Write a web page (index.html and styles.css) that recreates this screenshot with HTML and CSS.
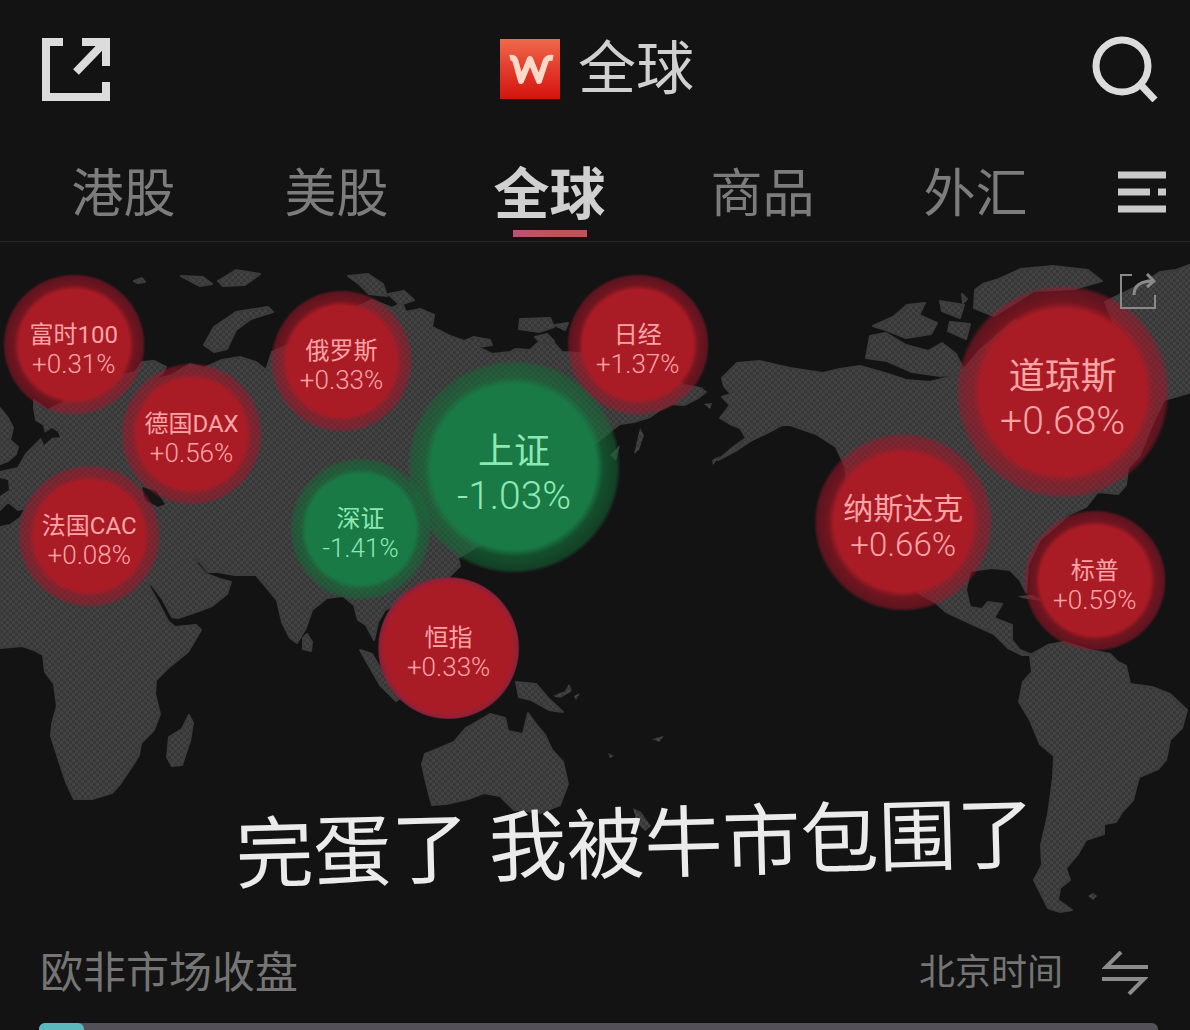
FILE: index.html
```html
<!DOCTYPE html>
<html lang="zh-CN">
<head>
<meta charset="utf-8">
<meta name="viewport" content="width=device-width, initial-scale=1">
<title>全球</title>
<link rel="stylesheet" href="styles.css">
</head>
<body>
<header class="topbar">
  <button class="icon-button" type="button" aria-label="分享">
    <svg class="icon-share" viewBox="0 0 68 64" fill="none" stroke="currentColor" stroke-width="8">
      <path d="M21 5H4v55h60V45M40 5h24v24M62 6 34 35"/>
    </svg>
  </button>
  <h1 class="title">
    <svg class="logo" viewBox="0 0 60 60" aria-hidden="true">
      <defs>
        <linearGradient id="logo-red" x1="0" y1="0" x2="0" y2="1">
          <stop offset="0" stop-color="#f06a4c"/><stop offset=".5" stop-color="#e33a2c"/><stop offset="1" stop-color="#d4140f"/>
        </linearGradient>
      </defs>
      <path fill="url(#logo-red)" d="M0 0h60v60H0z"/>
      <path fill="none" stroke="#ffd9c8" stroke-width="6" stroke-linejoin="round" d="M10 19c4-1 5 1 6 5l5 18 9-22 9 22 6-18c1-4 3-6 8-5"/>
    </svg>
    <span>全球</span>
  </h1>
  <button class="icon-button" type="button" aria-label="搜索">
    <svg class="icon-search" viewBox="0 0 66 66" fill="none" stroke="currentColor" stroke-width="7">
      <circle cx="30" cy="30" r="26"/><path d="m48 48 15 16"/>
    </svg>
  </button>
</header>

<nav class="tabs">
  <a class="tab" href="#hk">港股</a>
  <a class="tab" href="#us">美股</a>
  <a class="tab tab-active" href="#global" aria-current="page">全球</a>
  <a class="tab" href="#goods">商品</a>
  <a class="tab" href="#fx">外汇</a>
  <button class="icon-button tabs-menu" type="button" aria-label="栏目">
    <svg class="icon-menu" viewBox="0 0 48 42" fill="none" stroke="currentColor" stroke-width="7">
      <path d="M0 4h48M0 21h32M40 21h8M0 38h48"/>
    </svg>
  </button>
</nav>

<main>
<section class="map" aria-label="全球指数">
  <svg class="world" viewBox="0 242 1190 680" aria-hidden="true">
    <defs>
      <pattern id="dots" width="6" height="6" patternUnits="userSpaceOnUse">
        <path fill="#434343" d="M0 0h6v6H0z"/>
        <path fill="#373737" d="M0 0h3v3H0zM3 3h3v3H3z"/>
      </pattern>
    </defs>
    <g fill="url(#dots)" stroke="#3c3c3c" stroke-width="2" stroke-linejoin="round">
      <path d="M0 408 8 418 13 428 10 440 18 447 16 454 8 461 0 464z"/>
      <path d="M34 400 48 410 60 404 100 380 135 372 142 362 154 361 166 367 162 374 150 380 170 376 190 364 204 368 222 360 240 357 256 362 266 370 272 352 300 340 330 320 372 300 392 308 402 303 406 312 420 309 434 315 432 327 450 336 464 341 474 337 490 340 492 345 478 347 492 354 510 352 516 349 530 350 540 341 554 343 562 352 600 354 650 360 684 385 700 388 706 392 698 398 684 405 672 404 660 410 650 417 634 422 620 424 612 430 600 440 590 447 580 470 560 500 520 525 480 545 458 558 460 566 448 578 430 590 405 600 385 610 378 622 374 640 366 625 358 620 354 605 343 596 327 598 312 610 306 628 297 643 290 638 282 622 277 600 267 588 256 575 235 575 218 572 208 572 195 557 197 564 206 574 220 579 231 582 227 594 212 606 196 612 178 618 172 617 163 600 148 580 150 588 158 602 168 621 175 627 196 625 201 630 188 652 168 668 156 680 155 694 160 714 154 730 141 743 139 755 131 768 120 784 112 793 92 799 74 799 66 782 58 758 51 736 52 724 57 706 54 684 45 672 43 655 34 650 22 646 0 648V527L10 525 20 518 26 508 18 510 8 502 0 510V472L18 468 26 454 34 446 46 434 44 425 36 420 34 408z"/>
      <path d="m189 715 4 8-3 18-8 24-10 1-5-9 2-20 13-8z"/>
      <path d="m307 634 5 8-1 9-8-2v-11zM360 650l12 4 12 20 20 22-8 5-16-16z"/>
      <path d="m204 345 10-18 22-15 32-5 5 5-22 7-15 11-9 19-13 3zM181 276l22 1 9 7-12 2zM218 281l18-11 24 4-15 11-22 1zM134 281l8-3 3 4-7 1zM348 276l20-2 15 10 4 12-18-2-10-10zM388 294l16-3 10 9-14 5zM520 319l30-1 4 9-15 5-20-3zM555 325l13-2-3 7zM535 337l12-3 7 7-12 3z"/>
      <path d="M425 754 440 748 454 742 466 728 480 720 490 714 505 718 508 731 523 734 528 713 535 723 545 735 552 750 563 762 568 784 560 805 540 813 526 811 514 810 500 796 484 793 468 799 446 804 432 805 429 794 425 778 422 764z"/>
      <path d="m516 682 20 2 12 14 15 14-14-2-18-10-12-3z"/>
      <path stroke="none" d="m553 696 12-5 4-7 3 7-12 7zM574 696l6-3-4 7zM652 739l12-3-5 6zM608 753l6 3-4 2zM633 808l8 4 10 14-6 5-8-8z"/>
      <path stroke="none" d="m695 391 8-4-4 12zM704 404l8-1-2 6zM640 428l4 7-5 15-5 4zM610 455l10-10-4 16zM712 460l8-4-7 9z"/>
      <path d="M722 378 737 363 760 361 790 368 823 373 840 369 860 366 888 374 906 380 930 382 960 374 980 350 1015 320 1060 350 1120 340 1105 302 1140 285 1160 272 1176 270 1192 264V392L1178 396 1164 400 1152 425 1140 455 1128 468 1126 485 1118 494 1098 492 1086 507 1070 514 1040 540 1028 565 1026 592 1020 580 1010 570 992 568 970 571 966 590 970 607 982 609 988 602 1002 604 994 618 1012 625 1012 640 1020 650 1032 655 1022 655 1008 648 994 634 972 624 946 612 935 602 920 594 880 550 848 490 845 466 836 447 816 434 790 425 782 425 765 434 752 440 737 450 718 460 732 448 746 438 740 428 730 424 720 418 730 405 722 397 731 394 724 386z"/>
      <path d="m866 358 4-22 16-3 20 12 22 6 14-8 14 11 10 20-26 2-28-4-25-11zM873 326l20-9 14-12 18-2-6 12 18 8-6 11-25 4-20-8zM940 301l24 4-4 13-18-7zM950 322l20 2-4 15-18-8zM975 290l8-6 16-5 22-10 32-3 35 4 14 11-28 8-40 2-40 25-20-8zM962 294l5 5-4 4z"/>
      <path d="M1030 655 1048 645 1064 642 1090 650 1110 654 1118 662 1126 666 1130 684 1152 687 1170 694 1187 710 1182 728 1170 740 1166 760 1158 769 1139 777 1133 800 1122 812 1116 822 1104 824 1104 834 1086 840 1078 854 1066 868 1070 880 1060 888 1058 900 1072 910 1060 912 1048 908 1040 892 1034 880 1042 865 1041 845 1048 815 1053 778 1054 756 1040 744 1030 720 1019 702 1023 682 1032 672z"/>
      <path stroke="none" d="m1018 596 16-1 8 6-20-3zM1088 896l5-3 4 3-4 4z"/>
    </g>
    <g fill="#151515">
      <path d="m142 487 14 4 9 13-7 3-13-7zM0 478l8 2 1 10-9 6zM40 436l12-8 6 4 2 5-8 1-8 7zM1040 300l25-8 20 4-22 8z"/>
    </g>
  </svg>

  <ul class="bubbles">
    <li class="bubble up ftse"><span>富时100</span><b>+0.31%</b></li>
    <li class="bubble up russia"><span>俄罗斯</span><b>+0.33%</b></li>
    <li class="bubble up nikkei"><span>日经</span><b>+1.37%</b></li>
    <li class="bubble up dax"><span>德国DAX</span><b>+0.56%</b></li>
    <li class="bubble up cac"><span>法国CAC</span><b>+0.08%</b></li>
    <li class="bubble down shenzhen"><span>深证</span><b>-1.41%</b></li>
    <li class="bubble down large shanghai"><span>上证</span><b>-1.03%</b></li>
    <li class="bubble up hangseng"><span>恒指</span><b>+0.33%</b></li>
    <li class="bubble up large dow"><span>道琼斯</span><b>+0.68%</b></li>
    <li class="bubble up medium nasdaq"><span>纳斯达克</span><b>+0.66%</b></li>
    <li class="bubble up sp"><span>标普</span><b>+0.59%</b></li>
  </ul>

  <button class="icon-button map-share" type="button" aria-label="分享地图">
    <svg class="icon-map-share" viewBox="0 0 36 36" fill="none" stroke="currentColor" stroke-width="2">
      <path d="M12 2H1v33h34V22"/><path stroke-width="3" d="M14 22c0-9 6-14 19-14M27 1l7 7-7 6"/>
    </svg>
  </button>

  <p class="caption">完蛋了 我被牛市包围了</p>
</section>

<section class="session">
  <div class="session-row">
    <h2 class="session-name">欧非市场收盘</h2>
    <button class="timezone" type="button">
      <span>北京时间</span>
      <svg class="icon-swap" viewBox="0 0 46 44" fill="none" stroke="currentColor" stroke-width="4">
        <path d="M46 16H4L19 1M0 28h42L27 43"/>
      </svg>
    </button>
  </div>
  <div class="timeline"><div class="timeline-now"></div></div>
</section>
</main>
</body>
</html>
```
FILE: styles.css
```css
* {
  box-sizing: border-box;
}

body {
  margin: 0;
  background: #131313;
  color: #dcdcdc;
  font-family: Roboto, "Noto Sans CJK SC", sans-serif;
}

button {
  margin: 0;
  padding: 0;
  border: 0;
  background: none;
  color: inherit;
  font: inherit;
}

svg {
  display: block;
}

.topbar {
  display: flex;
  align-items: center;
  justify-content: space-between;
  height: 138px;
  padding: 0 32px 0 42px;
}

.icon-share {
  width: 68px;
  height: 64px;
}

.icon-search {
  width: 66px;
  height: 66px;
}

.title {
  display: flex;
  align-items: center;
  gap: 18px;
  margin: 0 8px 0 0;
  color: #d0d0d0;
  font-size: 58px;
  font-weight: 400;
  line-height: 64px;
}

.logo {
  width: 60px;
  height: 60px;
}

.tabs {
  display: flex;
  height: 104px;
  padding: 4px 24px 0 17px;
  border-bottom: 1px solid #272727;
}

.tab {
  display: flex;
  flex: 1;
  align-items: center;
  justify-content: center;
  position: relative;
  padding-top: 6px;
  color: #7c7c7c;
  font-size: 52px;
  line-height: 60px;
  text-decoration: none;
}

.tab-active {
  color: #d0d0d0;
  font-size: 56px;
  font-weight: 700;
}

.tab-active::after {
  content: "";
  position: absolute;
  bottom: 4px;
  left: 50%;
  width: 74px;
  height: 7px;
  margin-left: -37px;
  background: linear-gradient(90deg, #bb5278, #c05358 50%);
}

.tabs-menu {
  margin-left: 36px;
  color: #cacaca;
}

.icon-menu {
  width: 48px;
  height: 42px;
}

.map {
  position: relative;
  aspect-ratio: 1190 / 680;
}

.world {
  width: 100%;
  height: 100%;
}

.bubbles {
  margin: 0;
  padding: 0;
  list-style: none;
}

.bubble {
  display: flex;
  flex-direction: column;
  align-items: center;
  justify-content: center;
  position: absolute;
  width: 12%;
  padding-top: 10px;
  aspect-ratio: 1;
  transform: translate(-50%, -50%);
  border-radius: 50%;
  font-size: 24px;
  line-height: 29px;
  white-space: nowrap;
}

.bubble b {
  font-size: 26px;
  font-weight: 300;
}

.up {
  background: radial-gradient(closest-side, #a91c26 77%, rgba(165, 22, 38, 0.65) 84%, rgba(160, 22, 42, 0.52) 96%, transparent);
  color: #ffa3a5;
}

.down {
  background: radial-gradient(closest-side, #197a45 77%, rgba(20, 110, 58, 0.65) 84%, rgba(20, 105, 55, 0.52) 96%, transparent);
  color: #8fe8b4;
}

.medium {
  width: 15%;
  font-size: 30px;
  line-height: 36px;
}

.bubble.medium b {
  font-size: 33px;
}

.large {
  width: 18%;
  padding-top: 14px;
  font-size: 36px;
  line-height: 44px;
}

.bubble.large b {
  font-size: 39px;
}

.ftse { left: 6.2%; top: 15.1%; }
.russia { left: 28.7%; top: 17.5%; }
.nikkei { left: 53.6%; top: 15.1%; }
.dax { left: 16.1%; top: 28.2%; }
.cac { left: 7.5%; top: 43.2%; }
.shenzhen { left: 30.3%; top: 42.2%; }
.shanghai { left: 43.2%; top: 33.1%; }
.hangseng { left: 37.7%; top: 59.7%; }
.dow { left: 89.3%; top: 22.1%; }
.nasdaq { left: 75.9%; top: 41.2%; }
.sp { left: 92%; top: 49.8%; }

.hangseng {
  background: radial-gradient(closest-side, #a91c26 90%, #981f35 94%, #8c2035 98%, transparent);
}

.map-share {
  position: absolute;
  top: 31px;
  right: 34px;
  color: #8a8a8a;
}

.icon-map-share {
  width: 36px;
  height: 36px;
}

.caption {
  position: absolute;
  top: 88.8%;
  left: 53.4%;
  margin: 0;
  transform: translate(-50%, -50%) rotate(-1.5deg);
  color: #ebebeb;
  font-size: 78px;
  line-height: 90px;
  white-space: nowrap;
}

.session-row {
  display: flex;
  align-items: center;
  justify-content: space-between;
  height: 101px;
  padding: 0 42px 0 40px;
  color: #757575;
}

.session-name {
  margin: 0;
  font-size: 43px;
  font-weight: 400;
  line-height: 56px;
}

.timezone {
  display: flex;
  align-items: center;
  gap: 39px;
  font-size: 36px;
  line-height: 48px;
}

.icon-swap {
  width: 46px;
  height: 44px;
  color: #8c8c8c;
}

.timeline {
  height: 7px;
  margin: 0 32px 0 39px;
  overflow: hidden;
  border-radius: 6px 6px 0 0;
  background: #535157;
}

.timeline-now {
  width: 4%;
  height: 100%;
  border-radius: 0 6px 0 0;
  background: #5bb9be;
}
```
